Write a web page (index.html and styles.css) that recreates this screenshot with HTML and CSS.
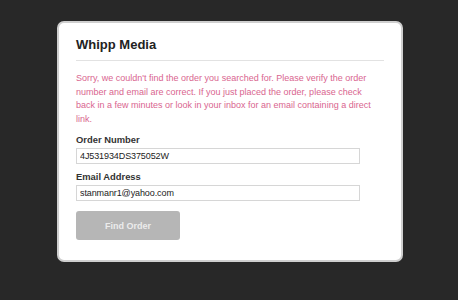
FILE: index.html
```html
<!DOCTYPE html>
<html lang="en">
<head>
    <meta charset="UTF-8">
    <title>Whipp Media - Find Order</title>
    <link rel="stylesheet" href="styles.css">
</head>
<body>
    <div class="card">
        <h1>Whipp Media</h1>
        <p class="error">Sorry, we couldn't find the order you searched for. Please verify the order number and email are correct. If you just placed the order, please check back in a few minutes or look in your inbox for an email containing a direct link.</p>
        <label for="orderNumber">Order Number</label>
        <input type="text" id="orderNumber" value="4J531934DS375052W">
        <label for="email">Email Address</label>
        <input type="text" id="email" value="stanmanr1@yahoo.com">
        <button class="find">Find Order</button>
    </div>
</body>
</html>
```

FILE: styles.css
```css
body { margin: 0; background: #282828; font-family: "Liberation Sans", Arial, sans-serif; padding-top: 21px; height: 300px; box-sizing: border-box; }
.card { box-sizing: border-box; width: 346px; margin-left: 57px; background: #fff; border: 2px solid #cfcfcf; border-radius: 7px; padding: 14px 17px 20px; }
h1 { font-size: 13px; font-weight: bold; color: #222; margin: 0; padding-bottom: 8px; border-bottom: 1px solid #e2e2e2; }
.error { max-width: 298px; color: #d9658f; font-size: 9px; line-height: 13.5px; margin: 11px 0 8px; }
label { display: block; font-size: 9.4px; font-weight: bold; color: #333; margin-bottom: 3px; }
input[type="text"] { box-sizing: border-box; display: block; width: 284px; height: 16px; margin: 0 0 7px; padding: 0 3px; border: 1px solid #d6d6d6; font-family: "Liberation Sans", Arial, sans-serif; font-size: 9px; letter-spacing: -0.1px; color: #222; }
.find { display: block; width: 104px; height: 29px; margin-top: 10px; background: #b6b6b6; color: #ececec; border: none; border-radius: 3px; font-family: "Liberation Sans", Arial, sans-serif; font-size: 9px; font-weight: bold; }
```
